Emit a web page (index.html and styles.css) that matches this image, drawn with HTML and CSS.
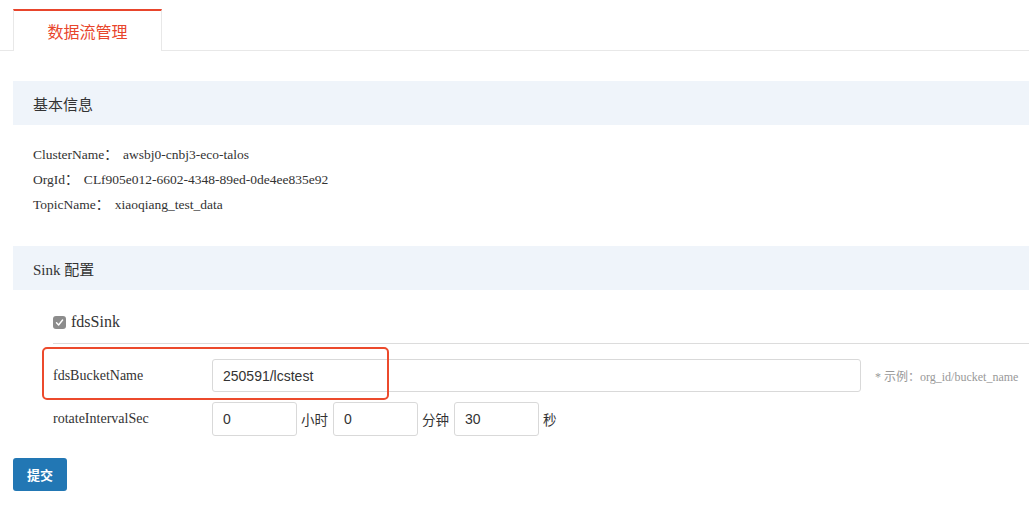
FILE: index.html
```html
<!DOCTYPE html>
<html lang="zh">
<head>
<meta charset="utf-8">
<title>数据流管理</title>
<link rel="stylesheet" href="styles.css">
</head>
<body>
<div class="tabbar">
  <div class="tab">数据流管理</div>
</div>
<div class="page">
  <div class="section-head">基本信息</div>
  <div class="info">
    <div class="info-line">ClusterName： awsbj0-cnbj3-eco-talos</div>
    <div class="info-line">OrgId： CLf905e012-6602-4348-89ed-0de4ee835e92</div>
    <div class="info-line">TopicName： xiaoqiang_test_data</div>
  </div>
  <div class="section-head sink-head">Sink 配置</div>
  <div class="sink">
    <label class="check-row"><span class="checkbox"><svg width="13" height="13" viewBox="0 0 13 13"><path d="M3.5 6.8 L5.6 9 L9.6 4" fill="none" stroke="#fff" stroke-width="1.4" stroke-linecap="round" stroke-linejoin="round"/></svg></span>fdsSink</label>
    <div class="rule"></div>
    <div class="form-row first">
      <div class="label">fdsBucketName</div>
      <div class="input wide">250591/lcstest</div>
      <div class="hint">* 示例：org_id/bucket_name</div>
      <div class="highlight"></div>
    </div>
    <div class="form-row second">
      <div class="label">rotateIntervalSec</div>
      <div class="input small">0</div><span class="unit">小时</span>
      <div class="input small">0</div><span class="unit">分钟</span>
      <div class="input small">30</div><span class="unit">秒</span>
    </div>
  </div>
  <button class="submit">提交</button>
</div>
</body>
</html>
```
FILE: styles.css
```css
html, body {
  margin: 0;
  padding: 0;
  background: #fff;
  overflow: hidden;
}
body {
  font-family: "Liberation Serif", "Noto Sans CJK SC", serif;
  color: #333;
}
.tabbar {
  margin-top: 9px;
  height: 41px;
  border-bottom: 1px solid #e8e8e8;
  padding-left: 13px;
  display: flex;
}
.tab {
  width: 147px;
  height: 40px;
  border: 1px solid #e8e8e8;
  border-top: 2px solid #e8452c;
  border-bottom: none;
  background: #fff;
  margin-bottom: -1px;
  box-sizing: content-box;
  color: #e8452c;
  font-family: "Noto Sans CJK SC", sans-serif;
  font-size: 16px;
  display: flex;
  align-items: center;
  justify-content: center;
}
.page {
  padding-left: 13px;
  padding-top: 30px;
}
.section-head {
  height: 44px;
  background: #eff4fa;
  padding-left: 20px;
  display: flex;
  align-items: center;
  font-family: "Liberation Serif", "Noto Sans CJK SC", serif;
  font-size: 15px;
  color: #333;
}
.info {
  padding: 17px 0 0 20px;
  height: 121px;
  box-sizing: border-box;
}
.info-line {
  font-size: 13.5px;
  line-height: 25px;
  color: #333;
  white-space: pre;
  word-spacing: 2px;
}
.sink {
  padding-left: 40px;
  padding-top: 24px;
}
.check-row {
  display: flex;
  align-items: center;
  gap: 5px;
  font-size: 16px;
  height: 16px;
  color: #333;
}
.checkbox {
  width: 13px;
  height: 13px;
  border-radius: 3px;
  background: #8c8c8c;
  display: inline-flex;
}
.rule {
  margin-top: 13px;
  border-top: 1px solid #dcdcdc;
}
.form-row {
  display: flex;
  align-items: center;
  position: relative;
}
.form-row.first {
  margin-top: 15px;
}
.form-row.second {
  margin-top: 10px;
}
.label {
  width: 159px;
  font-size: 14px;
  color: #333;
}
.input {
  height: 33px;
  box-sizing: border-box;
  border: 1px solid #d9d9d9;
  border-radius: 3px;
  padding-left: 10px;
  display: flex;
  align-items: center;
  font-family: "Liberation Sans", Arial, sans-serif;
  font-size: 14px;
  color: #333;
  background: #fff;
}
.input.wide {
  width: 649px;
}
.input.small {
  width: 85px;
  height: 34px;
}
.unit {
  font-family: "Noto Sans CJK SC", sans-serif;
  font-size: 13.5px;
  color: #333;
  margin: 0 5px 0 4px;
}
.hint {
  margin-left: 14px;
  font-size: 12px;
  color: #999;
  font-family: "Liberation Serif", "Noto Sans CJK SC", serif;
}
.highlight {
  position: absolute;
  left: -11px;
  top: -12px;
  width: 347px;
  height: 53px;
  border: 2.5px solid #ec4a2c;
  border-radius: 5px;
  box-sizing: border-box;
}
.submit {
  margin-top: 22px;
  width: 54px;
  height: 33px;
  border: none;
  border-radius: 3px;
  background: #2277b4;
  color: #fff;
  font-family: "Noto Sans CJK SC", sans-serif;
  font-weight: bold;
  font-size: 13px;
  padding: 0;
}
```
